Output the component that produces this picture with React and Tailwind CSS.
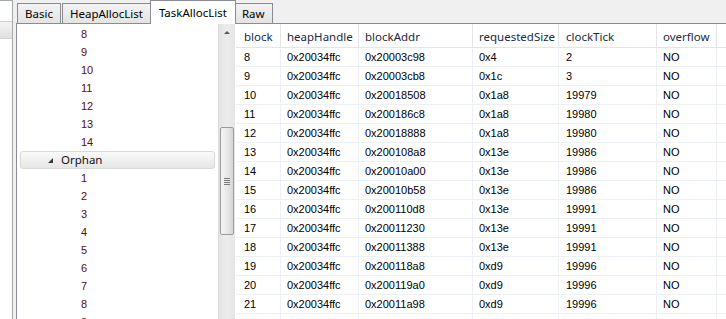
import React from 'react';

const tabs = ['Basic', 'HeapAllocList', 'TaskAllocList', 'Raw'];

const columns = [
  { key: 'block', w: 'w-[45px]', pad: 'pl-[8px]' },
  { key: 'heapHandle', w: 'w-[78px]', pad: 'pl-[6px]' },
  { key: 'blockAddr', w: 'w-[114px]', pad: 'pl-[6px]' },
  { key: 'requestedSize', w: 'w-[86px]', pad: 'pl-[6px]' },
  { key: 'clockTick', w: 'w-[98px]', pad: 'pl-[7px]' },
  { key: 'overflow', w: 'w-[60px]', pad: 'pl-[6px]' },
];

const rows = [
  ['8', '0x20034ffc', '0x20003c98', '0x4', '2', 'NO'],
  ['9', '0x20034ffc', '0x20003cb8', '0x1c', '3', 'NO'],
  ['10', '0x20034ffc', '0x20018508', '0x1a8', '19979', 'NO'],
  ['11', '0x20034ffc', '0x200186c8', '0x1a8', '19980', 'NO'],
  ['12', '0x20034ffc', '0x20018888', '0x1a8', '19980', 'NO'],
  ['13', '0x20034ffc', '0x200108a8', '0x13e', '19986', 'NO'],
  ['14', '0x20034ffc', '0x20010a00', '0x13e', '19986', 'NO'],
  ['15', '0x20034ffc', '0x20010b58', '0x13e', '19986', 'NO'],
  ['16', '0x20034ffc', '0x200110d8', '0x13e', '19991', 'NO'],
  ['17', '0x20034ffc', '0x20011230', '0x13e', '19991', 'NO'],
  ['18', '0x20034ffc', '0x20011388', '0x13e', '19991', 'NO'],
  ['19', '0x20034ffc', '0x200118a8', '0xd9', '19996', 'NO'],
  ['20', '0x20034ffc', '0x200119a0', '0xd9', '19996', 'NO'],
  ['21', '0x20034ffc', '0x20011a98', '0xd9', '19996', 'NO'],
  ['', '', '', '', '', ''],
];

const uiFont = { fontFamily: '"Noto Sans", sans-serif' };
const cellFont = { fontFamily: '"Liberation Sans", Arial, sans-serif' };

function TreeRow({ label }) {
  return (
    <div className="h-[18px] shrink-0 flex items-center pl-[64px] text-[11px] text-[#5c0a0a]" style={cellFont}>
      {label}
    </div>
  );
}

export default function App() {
  return (
    <div className="w-[726px] h-[319px] bg-[#f0f0f0] flex overflow-hidden">
      {/* sliver of neighbouring panel */}
      <div className="w-[13px] shrink-0 bg-white border-r border-t border-[#a5a8ad] flex flex-col">
        <div className="h-[20px]" />
        <div className="h-[18px] border-y border-[#d2d2d2] bg-gradient-to-b from-[#f4f4f4] to-[#e0e0e0]" />
      </div>
      <div className="w-[3px] shrink-0" />

      <div className="flex-1 flex flex-col min-w-0">
        {/* tab strip */}
        <div className="h-[23px] flex items-end pl-[1px] shrink-0" style={uiFont}>
          {tabs.map((t) => {
            const active = t === 'TaskAllocList';
            return active ? (
              <div
                key={t}
                className="relative z-10 -mx-[2px] -mb-[1px] h-[24px] px-[8px] flex items-center bg-white border border-b-0 border-[#898c95] text-[11.5px] text-black"
              >
                {t}
              </div>
            ) : (
              <div
                key={t}
                className="h-[20px] px-[7px] mr-[1px] flex items-center border border-b-0 border-[#898c95] bg-gradient-to-b from-[#f3f3f3] to-[#e3e3e3] text-[11.5px] text-black"
              >
                {t}
              </div>
            );
          })}
        </div>

        {/* tab content */}
        <div className="flex-1 flex border-l border-t border-[#898c95] bg-white min-h-0">
          {/* tree */}
          <div className="w-[201px] shrink-0 flex flex-col pt-[1px] overflow-hidden">
            {['8', '9', '10', '11', '12', '13', '14'].map((n, i) => (
              <TreeRow key={'a' + i} label={n} />
            ))}
            <div className="h-[18px] shrink-0 flex items-center px-[3px]">
              <div
                className="flex-1 h-[18px] flex items-center rounded-[3px] border border-[#d9d9d9] bg-gradient-to-b from-[#fafafa] to-[#e6e6e6] text-[11.5px] text-[#111]"
                style={uiFont}
              >
                <span className="ml-[27px] mr-[8px] w-0 h-0 border-l-[5px] border-l-transparent border-b-[5px] border-b-[#3a3a3a]" />
                Orphan
              </div>
            </div>
            {['1', '2', '3', '4', '5', '6', '7', '8', '9'].map((n, i) => (
              <TreeRow key={'b' + i} label={n} />
            ))}
          </div>

          {/* tree scrollbar */}
          <div className="w-[17px] shrink-0 flex flex-col items-center bg-gradient-to-r from-[#e3e3e3] via-[#ececec] to-[#e6e6e6] border-l border-[#dadada]">
            <div className="h-[17px] flex items-center justify-center w-full">
              <span className="w-0 h-0 border-x-[3px] border-x-transparent border-b-[3px] border-b-[#505a66]" />
            </div>
            <div className="h-[86px]" />
            <div className="w-[14px] h-[108px] rounded-[2px] border border-[#9b9b9b] bg-gradient-to-r from-[#f4f4f4] via-[#e8e8e8] to-[#d6d6d6] flex flex-col items-center justify-center gap-[1px]">
              <div className="w-[6px] h-[1px] bg-[#7a7a7a]" />
              <div className="w-[6px] h-[1px] bg-[#7a7a7a]" />
              <div className="w-[6px] h-[1px] bg-[#7a7a7a]" />
              <div className="w-[6px] h-[1px] bg-[#7a7a7a]" />
            </div>
          </div>

          {/* table */}
          <div className="flex-1 flex flex-col min-w-0 overflow-hidden pl-[1px]">
            <div className="h-[24px] flex shrink-0 border-b border-[#e5e5e5] bg-white" style={uiFont}>
              {columns.map((c) => (
                <div
                  key={c.key}
                  className={`${c.w} ${c.pad} shrink-0 flex items-center pt-[2px] border-r border-[#e3e5e8] text-[11.5px] text-[#1b2a3e]`}
                >
                  {c.key}
                </div>
              ))}
              <div className="flex-1" />
            </div>
            {rows.map((r, i) => (
              <div key={i} className="h-[19px] flex shrink-0 border-b border-[#edf0f5]" style={cellFont}>
                {r.map((v, j) => (
                  <div
                    key={j}
                    className={`${columns[j].w} ${columns[j].pad} shrink-0 flex items-center border-r border-[#edf0f5] text-[11px] text-black`}
                  >
                    {v}
                  </div>
                ))}
                <div className="flex-1" />
              </div>
            ))}
          </div>
        </div>
      </div>
    </div>
  );
}
